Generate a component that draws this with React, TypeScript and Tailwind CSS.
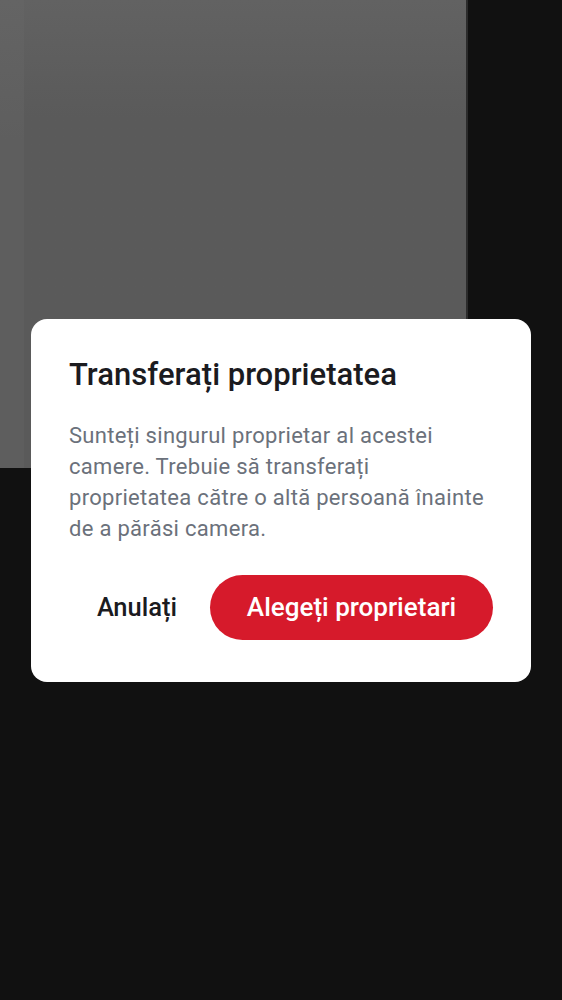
import React from 'react';

const TransferDialog = () => {
  return (
    <div className="w-full rounded-[16px] bg-white px-[38px] pt-[36px] pb-[42px]">
      <h2 className="font-['Roboto_Medium',Roboto,sans-serif] text-[31px] leading-[40px] font-medium text-[#1b1b1f]">
        Transferați proprietatea
      </h2>
      <p className="mt-[25px] text-[22px] leading-[31px] tracking-[0.3px] text-[#6b717b]">
        Sunteți singurul proprietar al acestei camere. Trebuie să transferați proprietatea către o altă persoană înainte de a părăsi camera.
      </p>
      <div className="mt-[31px] flex items-center justify-end gap-[5px] font-['Roboto_Medium',Roboto,sans-serif] font-medium">
        <button className="h-[65px] px-[28px] text-[25.5px] text-[#1b1b1f]">Anulați</button>
        <button className="h-[65px] w-[283px] rounded-full bg-[#d61a2b] text-[26px] text-white">
          Alegeți proprietari
        </button>
      </div>
    </div>
  );
};

export default function App() {
  return (
    <div className="relative h-[1000px] w-full overflow-hidden bg-[#111111] font-['Roboto','Noto_Sans',sans-serif]">
      {/* video tile */}
      <div className="flex h-[468px] w-[468px]">
        <div className="h-full w-[24px] bg-gradient-to-b from-[#646464] via-[#5e5e5e] via-30% to-[#5e5e5e]" />
        <div className="h-full flex-1 bg-gradient-to-b from-[#626262] via-[#5a5a5a] via-25% to-[#5a5a5a]" />
        <div className="h-full w-[2px] bg-[#2c2c2c]" />
      </div>

      <div className="absolute inset-0 flex items-center justify-center px-[31px]">
        <TransferDialog />
      </div>
    </div>
  );
}
